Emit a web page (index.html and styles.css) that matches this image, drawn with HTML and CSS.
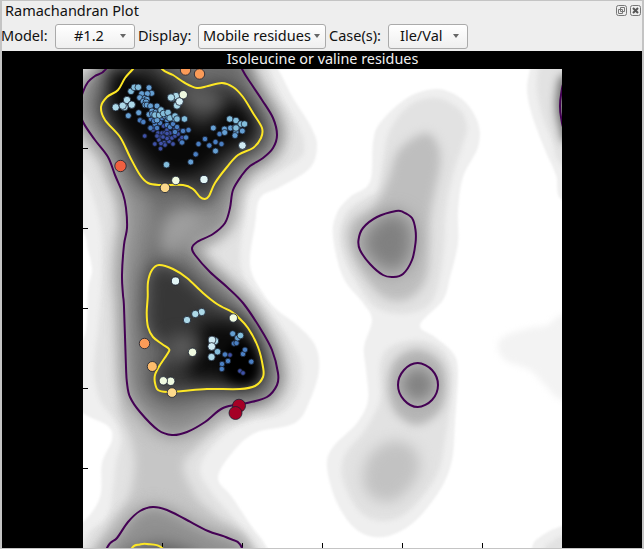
FILE: index.html
```html
<!DOCTYPE html>
<html lang="en">
<head>
<meta charset="utf-8">
<title>Ramachandran Plot</title>
<link rel="stylesheet" href="styles.css">
</head>
<body>
<main class="dock">
  <header class="titlebar">
    <h1 class="title">Ramachandran Plot</h1>
    <svg class="win" viewBox="0 0 11 11"><rect x=".5" y=".5" width="10" height="10" rx="2"/><path d="M4.5 2.5h4v4h-4zM2.5 4.5h4v4h-4z"/></svg>
    <svg class="win" viewBox="0 0 11 11"><rect x=".5" y=".5" width="10" height="10" rx="2"/><path class="cross" d="M3 3l5 5M8 3l-5 5"/></svg>
  </header>
  <div class="toolbar">
    <span class="label l-model">Model:</span>
    <button class="combo c-model"><span>#1.2</span></button>
    <span class="label l-display">Display:</span>
    <button class="combo c-display"><span>Mobile residues</span></button>
    <span class="label l-case">Case(s):</span>
    <button class="combo c-case"><span>Ile/Val</span></button>
  </div>
  <section class="figure">
    <h2 class="caption">Isoleucine or valine residues</h2>
    <svg id="plot" class="plot" viewBox="83 69 479 479"></svg>
  </section>
</main>
<script src="plot.js"></script>
</body>
</html>
```
FILE: styles.css
```css
* { box-sizing: border-box; }
body { margin: 0; background: #eee; font-family: "Noto Sans", sans-serif; font-size: 14.5px; color: #111; }
.dock { width: 644px; height: 549px; border: 1px solid #c4c4c4; border-left-width: 2px; border-right-width: 2px; display: flex; flex-direction: column; overflow: hidden; }
.titlebar { height: 20px; display: flex; align-items: center; gap: 3px; padding: 0 1px 2px 3px; }
.title { margin: 0 auto 0 0; font-size: 14.5px; font-weight: 400; line-height: 18px; }
.win { width: 11px; height: 11px; fill: none; stroke: #777; stroke-width: 1; }
.win .cross { stroke: #555; stroke-width: 2; }
.toolbar { height: 30px; display: flex; align-items: center; padding-top: 1px; }
.label { white-space: nowrap; line-height: 22px; padding-bottom: 3px; }
.l-model { width: 53px; margin-left: -1px; margin-right: 1px; }
.l-display { width: 60px; margin-left: 3px; }
.l-case { width: 59px; margin-left: 3px; }
.combo { height: 25px; flex: none; padding: 0 6px 0 0; border: 1px solid #aaa; border-radius: 3px; background: linear-gradient(#fff, #efefef); font: inherit; color: inherit; display: flex; align-items: center; justify-content: space-between; white-space: nowrap; }
.combo span { padding-bottom: 3px; }
.combo::after { content: ""; border: 3px solid transparent; border-top: 4px solid #666; border-bottom: 0; flex: none; margin-bottom: 2px; }
.c-model { width: 80px; padding-left: 18px; padding-right: 8px; }
.c-display { width: 128px; padding-left: 4px; padding-right: 5px; }
.c-case { width: 80px; padding-left: 11px; padding-right: 8px; }
.figure { height: 497px; background: #000; display: flex; flex-direction: column; align-items: center; padding-left: 1px; }
.caption { margin: 0; height: 18px; line-height: 16px; font-size: 14.4px; font-weight: 400; color: #f2f2f2; }
.plot { width: 479px; height: 479px; background: #fff; display: block; overflow: hidden; flex: none; }
.line { fill: none; stroke-width: 2; stroke-linejoin: round; }
.purple { stroke: #440154; }
.yellow { stroke: #fde725; }
.tick { stroke: #000; stroke-width: 1; }
.dot { stroke: #182030; stroke-width: .8; }
```
FILE: plot.js
```js
const NS = "http://www.w3.org/2000/svg";
const plot = document.getElementById("plot");

function add(tag, attrs, parent = plot) {
  const el = document.createElementNS(NS, tag);
  for (const k in attrs) el.setAttribute(k, attrs[k]);
  parent.appendChild(el);
  return el;
}

// Smooth closed curve through a flat list of x y pairs.
function curve(text) {
  const n = text.trim().split(/[\s,]+/).map(Number), p = [];
  for (let i = 0; i < n.length; i += 2) p.push([n[i], n[i + 1]]);
  const at = i => p[(i + p.length) % p.length];
  let d = `M${p[0]}`;
  for (let i = 0; i < p.length; i++) {
    const [a, b, c, e] = [at(i - 1), at(i), at(i + 1), at(i + 2)];
    d += `C${b[0] + (c[0] - a[0]) / 6} ${b[1] + (c[1] - a[1]) / 6} ${c[0] - (e[0] - b[0]) / 6} ${c[1] - (e[1] - b[1]) / 6} ${c}`;
  }
  return d + "Z";
}

const defs = add("defs", {});
[1, 2, 3, 4, 5, 6, 7, 8, 9, 10, 12].forEach(s => {
  const f = add("filter", { id: "b" + s, filterUnits: "userSpaceOnUse", x: 0, y: 0, width: 660, height: 640 }, defs);
  f.setAttribute("color-interpolation-filters", "sRGB");
  add("feGaussianBlur", { stdDeviation: s }, f);
});

const main = curve("106 69 95 76 88 82 83 92 79 107 83 122 95 140 108 157 115 175 123 194 126 208 127 228 124 245 122 275 123 295 124 307 126 367 127 383 130 397 140 412 158 430 172 435 187 432 205 422 223 408 247 403 267 397 277 385 278 373 272 350 260 328 243 303 227 287 210 272 195 255 192 248 197 242 213 234 225 223 230 208 233 190 242 175 250 166 263 158 273 148 277 135 273 118 262 100 252 85 242 69 230 40 120 40");
const lower = curve("107 548 117 538 128 522 140 511 153 507 167 510 185 519 208 531 228 538 242 548 250 590 95 590");
const yTop = curve("133 69 125 78 118 90 107 97 101 107 105 120 120 137 130 157 140 175 148 183 160 185 183 185 193 189 200 197 205 199 209 196 215 183 227 167 238 155 253 148 261 138 262 128 253 113 243 97 233 87 222 83 208 86 197 88 185 83 173 75 162 69 150 50");
const yLow = curve("159 265 152 270 148 282 147.7 297 146.7 313 148 327 153 337 162 344 169 349 168 353 160 365 155 375 155 383 158 390 167 392 183 391 207 389 240 389 255 386 263 377 263 367 258 347 248 328 238 317 232 312 217 304 203 293 187 278 173 269");
const yEnd = curve("132 548 140 544.5 147 544 162 548 170 570 125 570");
const right = curve("396 211 403 212 412 218 415.5 230 415.5 243 412 260 403 274 393 277 383 275 370 264 360 250 358.5 240 363 228 377 217");
const round = curve("417.7 363 432 370 438 385 432 400 417.7 407 404 400 398 385 404 370");
const edge = curve("564 84 561 95 560 106 561 117 564 127 570 106");

// Density field, lightest level first: path, fill, blur, outline growth.
const levels = [
  [curve("278 69 293 98 310 125 317 145 310 168 280 187 260 198 255 225 250 265 262 292 277 310 297 325 315 345 319 370 310 400 295 423 255 433 232 453 218 478 232 497 252 527 267 548 290 600 60 600 60 530 83 522 100 497 102 463 112 440 108 426 83 413 75 395 75 360 86 330 88 290 92 270 88 250 83 232 60 210 60 40 260 40"), "#efefef", 1],
  [curve("269 69 281 98 298 125 304 145 299 159 268 178 250 192 244 220 240 262 251 290 270 313 290 340 301 365 298 393 280 414 245 422 217 441 200 468 212 493 237 522 251 548 270 600 80 600 85 540 107 517 113 490 116 463 121 440 116 422 100 400 94 370 98 330 101 290 102 250 100 222 91 190 83 172 60 160 60 40 250 40"), "#e2e2e2", 2],
  [curve("122 400 131 440 135 465 128 500 105 535 90 600 270 600 242 540 215 515 195 495 183 466 197 447 217 425 245 413 180 390"), "#c6c6c6", 5],
  [main, "#c6c6c6", 5, 20],
  [lower, "#c6c6c6", 5, 19],
  [main, "#909090", 8, 5],
  [lower, "#909090", 8, 3],
  [curve("130 50 95 85 92 110 115 145 130 180 152 208 145 255 137 290 138 375 150 400 175 412 215 400 260 398 273 375 267 350 252 320 227 295 190 260 172 235 200 213 218 195 235 170 265 150 273 130 254 90 233 55"), "#6c6c6c", 9],
  [curve("170 212 200 210 202 228 184 240 176 255 162 252 160 232"), "#a0a0a0", 9],
  [curve("142 548 165 545 200 560 200 600 120 600 120 560"), "#585858", 8],
  [yTop, "#363636", 8],
  [yLow, "#373737", 8],
  [curve("110 72 135 73 160 85 180 113 205 128 230 103 250 115 252 130 246 139 222 153 198 173 165 174 140 150 114 116"), "#080808", 8],
  [curve("200 325 220 323 240 325 255 350 258 375 245 383 215 378 190 377 190 360 200 348"), "#0c0c0c", 8],
  [curve("230 345 248 345 257 365 251 382 232 381 222 365"), "#000", 4],
  [curve("195 86 215 92 222 102 205 112 188 105 182 92"), "#5c5c5c", 7],
  [curve("171 338 189 336 198 345 190 357 170 360"), "#5c5c5c", 8],
  [curve("437 89 463 100 478 123 478 147 463 177 458 210 458 243 450 277 443 300 420 325 435 337 453 353 458 372 455 423 452 460 440 490 413 523 383 537 357 530 337 503 327 467 333 447 357 423 368 400 366 370 364 347 372 320 363 303 343 277 333 237 337 213 350 197 370 182 373 143 380 123 407 98"), "#efefef", 1],
  [curve("437 98 460 110 467 128 462 147 453 175 446 210 444 250 437 290 425 308 400 314 375 307 358 285 345 260 340 235 347 212 365 198 378 190 383 160 390 130 410 105"), "#e2e2e2", 2],
  [curve("417 340 440 348 452 370 451 400 445 440 437 475 410 510 385 521 360 512 343 480 345 455 365 430 380 400 380 365 390 347"), "#e2e2e2", 2],
  [curve("425 133 438 145 440 165 435 190 430 220 428 270 418 292 400 301 380 295 360 270 348 240 353 220 375 205 388 180 399 150"), "#bebebe", 5],
  [curve("390 212 411 224 411 257 393 273 368 258 363 235"), "#808080", 9],
  [curve("417 349 440 361 446 385 440 411 417 425 395 412 388 385 395 360"), "#b6b6b6", 4],
  [curve("418 367 435 385 418 402 401 385"), "#828282", 7],
  [curve("393 441 415 450 418 475 396 500 373 498 363 480 370 455"), "#c2c2c2", 7],
  [curve("530 69 527 90 532 115 545 150 556 175 562 200 600 200 600 40 535 40"), "#efefef", 1],
  [curve("538 69 537 90 543 118 552 140 562 165 600 170 600 40 540 40"), "#e2e2e2", 2],
  [curve("564 75 557 90 556 110 560 130 566 142 600 130 600 80"), "#777", 4],
  [curve("562 315 548 325 530 328 507 335 498 345 505 360 530 370 545 385 562 400 600 400 600 310"), "#f3f3f3", 3],
  [curve("532 548 540 537 562 526 600 520 600 580 530 580"), "#efefef", 1],
  [curve("545 548 552 542 562 536 600 530 600 580 545 580"), "#e2e2e2", 2]
];
for (const [d, fill, blur, grow] of levels) {
  add("path", { d, fill, filter: `url(#b${blur})`, stroke: grow ? fill : "none", "stroke-width": grow || 0 });
}

for (let i = 0; i < 5; i++) {
  const y = 148.5 + 80 * i, x = 162.5 + 80 * i;
  add("path", { class: "tick", d: `M83 ${y}h5M${x} 548v-5` });
}
for (const d of [main, lower, right, round, edge]) add("path", { class: "line purple", d });
for (const d of [yTop, yLow, yEnd]) add("path", { class: "line yellow", d });

// Residue markers grouped by score: radius, fill, centres.
const groups = [
  [2.3, "#3f51a8", "144.7 136 150 127.7 153 130 154 127.5 158 133 160 137 162 133 163.5 126 165 132.5 167 130 168 137 170 133 172 138 174 132 175 136 178 134 180 140 182 137.5 173 144 169 141.5 164 142.5 167 138.5 160.5 148.7 154.8 144 159 140 165 145 161 143.5 182 142.5 175 129 171 126 167 133.5 178 129 184 131 157 136 163 137 240 371 243 373 227.5 361.5 230 355"],
  [2.7, "#4a7fc2", "140 120.3 143.3 122 150.5 128 155 124 157 128 167 125 170 127 173 124 177 127 188.5 130 183 131 186 137.5 182 142.5 151 119 154 121 156 117 160 123 162 118 167 120 150 115 175 132 160 109 225 354.5 228 361 222 364 221.8 369 234 343.5 236.5 343 243 354 245 349.8 251.3 361.7 198.5 144 209.3 145.5 195.7 154.3 205 139 219.5 134 215.5 142 221.5 144"],
  [3.0, "#659fd2", "149 87.7 151.7 93.3 141.7 93.7 147.3 93.7 139.7 97.7 145 98.3 147 99.3 143.3 101.3 146 102 145 105 147 105 150.5 106 138.7 112.7 149 114.5 152 111 152.5 114 156 112 158 115 160 110 163 112 165 116 168 117 174 119 177 118 157 106 157 120 128.3 115.7 213.3 128 224.5 129 224.7 132.5 230.5 128 235 127.5 236 132 242.3 131 237.5 127 235 135.5 215.5 151 190.7 162 232.7 333.7 237.5 338"],
  [3.3, "#83bddb", "131 91.3 134.3 87.3 138.3 87.3 155 115 159.5 115 161 110 163.5 113.5 168 112.5 170 118 175 116 177 119 184.5 119 229.7 119 236 120.5 241 124 244.5 124 236 128 166.5 164.7 240.5 335.5 217.5 351.7"],
  [3.7, "#add9e8", "115.7 107.3 124.5 107 122.7 105.7 127 100 131.7 104.7 172 98 176 96 177 105.5 171 97.5 201.7 312 195.3 314 187 320 215 341 211.5 357"],
  [3.9, "#d0ebf3", "179.5 101.5 242.4 145.5 212 340 211.7 346.5"],
  [4.1, "#e2f5f5", "175.5 281 204 179.5"],
  [4.2, "#eff9e0", "183.3 94.7 192.5 352.3 233.3 318 170.7 381.3 163.3 380.8 175.8 180.5"],
  [4.8, "#fdd98b", "165 187.8 172 392.6"],
  [5, "#fdbc6c", "152.3 366.5"],
  [5.2, "#fb9b58", "185.5 70 199.5 74 144.5 343.5"],
  [5.7, "#ef6040", "120.5 166"],
  [6.5, "#a50026", "239 405.7 235.5 413"]
];
for (const [r, fill, list] of groups) {
  const n = list.split(" ").map(Number);
  for (let i = 0; i < n.length; i += 2) add("circle", { class: "dot", cx: n[i], cy: n[i + 1], r, fill });
}
```
